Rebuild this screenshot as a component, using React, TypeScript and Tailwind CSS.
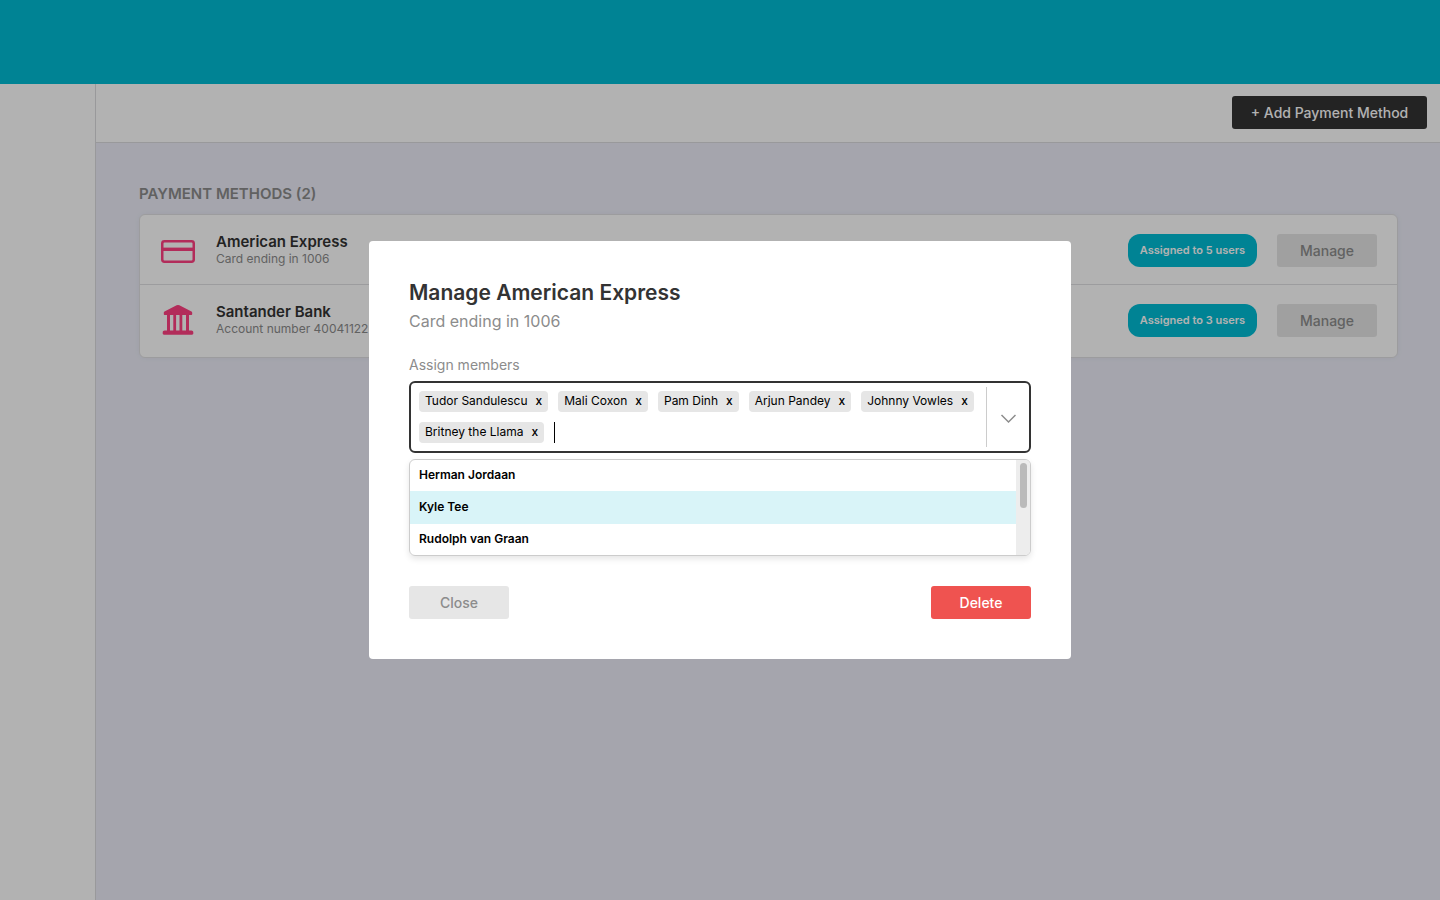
import React from 'react';

type Method = {
  name: string;
  detail: string;
  users: number;
  icon: React.ReactNode;
};

function CardIcon() {
  return (
    <svg width="36" height="34" viewBox="0 0 36 34" fill="none" aria-hidden="true">
      <rect x="2.25" y="7.25" width="31.5" height="20.5" rx="2.2" stroke="currentColor" strokeWidth="2.5" />
      <path d="M2 15.3h32" stroke="currentColor" strokeWidth="3.4" />
    </svg>
  );
}

function BankIcon() {
  return (
    <svg width="36" height="34" viewBox="0 0 36 34" fill="currentColor" aria-hidden="true">
      <path d="M16.600 1.300a3.200 3.200 0 0 1 2.800 0l11.600 6c.9.4 1.200.9 1.200 1.600v1c0 .7-.4 1.100-1.100 1.100H4.900c-.7 0-1.100-.4-1.100-1.100v-1c0-.7.3-1.200 1.200-1.600z" />
      <path d="M7 10h3v17H7zM13.300 10h2.800v17h-2.800zM19.500 10h2.800v17h-2.800zM26 10h3v17h-3z" />
      <path d="M4.600 26.500h26.800c1.100 0 1.900.8 1.900 1.800v1.200c0 .7-.5 1.200-1.200 1.200H3.900c-.7 0-1.200-.5-1.200-1.200v-1.200c0-1 .8-1.800 1.900-1.800z" />
    </svg>
  );
}

const methods: Method[] = [
  { name: 'American Express', detail: 'Card ending in 1006', users: 5, icon: <CardIcon /> },
  { name: 'Santander Bank', detail: 'Account number 40041122', users: 3, icon: <BankIcon /> },
];

const members = [
  'Tudor Sandulescu',
  'Mali Coxon',
  'Pam Dinh',
  'Arjun Pandey',
  'Johnny Vowles',
  'Britney the Llama',
];

const options = ['Herman Jordaan', 'Kyle Tee', 'Rudolph van Graan'];

function MethodRow({ method }: { method: Method }) {
  return (
    <li className="flex items-center border-b border-[#e0e0e2] pt-[18px] pr-5 pb-4 pl-5 last:border-b-0">
      <span className="text-[#ff4081]">{method.icon}</span>
      <div className="ml-5 flex-1">
        <h2 className="text-[15px] leading-[17px] font-semibold text-[#333]">{method.name}</h2>
        <p className="text-xs leading-[18px] text-[#8c8c8c]">{method.detail}</p>
      </div>
      <span className="flex h-[33px] w-[129px] items-center justify-center rounded-xl bg-[#00bcd4] text-[11px] font-semibold text-white">
        Assigned to {method.users} users
      </span>
      <button type="button" className="ml-5 h-[33px] w-[100px] rounded-[3px] bg-[#e6e6e6] text-sm font-medium text-[#8c8c8c]">
        Manage
      </button>
    </li>
  );
}

function MemberSelect() {
  return (
    <div>
      <label htmlFor="members" className="mt-[22px] block text-sm leading-5 text-[#8c8c8c]">
        Assign members
      </label>
      <div className="mt-1.5 flex items-stretch rounded-md border-2 border-[#333]">
        <div className="flex min-w-0 flex-1 flex-wrap gap-2.5 py-2 pl-2">
          {members.map((member) => (
            <span key={member} className="flex h-[21px] items-center rounded-[4px] bg-[#e6e6e6] pb-px pl-1.5 text-xs text-black">
              {member}
              <button type="button" aria-label={`Remove ${member}`} className="pr-1.5 pl-2 font-medium">
                x
              </button>
            </span>
          ))}
          <span className="flex h-[21px] min-w-20 flex-1 border-l border-black">
            <input id="members" type="text" className="w-full bg-transparent text-xs caret-transparent outline-none" />
          </span>
        </div>
        <button
          type="button"
          aria-label="Toggle members"
          className="my-1 flex w-[43px] items-center justify-center border-l border-[#ccc] pt-1 text-[#8c8c8c]"
        >
          <svg width="16" height="10" viewBox="0 0 16 10" fill="none" aria-hidden="true">
            <path d="M1.500 1l7 7 7-7" stroke="currentColor" strokeWidth="1.500" />
          </svg>
        </button>
      </div>
      <div className="mt-1.5 flex overflow-hidden rounded-md border border-[#ccc] shadow-[0_3px_6px_rgba(0,0,0,0.1)]">
        <ul role="listbox" aria-label="Members" className="flex-1 text-xs font-semibold text-black">
          {options.map((option) => (
            <li
              key={option}
              role="option"
              aria-selected={option === 'Kyle Tee'}
              className="flex h-[31px] items-center px-[9px] pb-px aria-selected:h-[33px] aria-selected:bg-[#d9f4f8]"
            >
              {option}
            </li>
          ))}
        </ul>
        <div className="flex w-3.5 justify-center bg-[#ededed] pt-[3px]">
          <div className="h-[45px] w-[7px] rounded-full bg-[#bababa]" />
        </div>
      </div>
    </div>
  );
}

export default function App() {
  return (
    <div className="flex min-h-screen flex-col bg-[#ecedf8] font-['Inter',sans-serif]">
      <header className="h-[84px] bg-[#00bcd4]" />
      <div className="flex flex-1">
        <aside className="w-24 border-r border-[#dcdcde] bg-white" />
        <main className="flex-1">
          <div className="flex justify-end border-b border-[#dcdcde] bg-white pt-3 pr-[13px] pb-[13px]">
            <button type="button" className="h-[33px] w-[195px] rounded-[3px] bg-[#333] text-sm font-medium text-white">
              + Add Payment Method
            </button>
          </div>
          <section className="pt-[41px] pr-[42px] pl-[43px]">
            <h1 className="text-[15px] leading-5 font-semibold text-[#8c8c8c]">PAYMENT METHODS (2)</h1>
            <ul className="mt-2.5 rounded-md border border-[#e0e0e2] bg-white pb-[3px] shadow-[0_0_6px_rgba(0,0,0,0.04)]">
              {methods.map((method) => (
                <MethodRow key={method.name} method={method} />
              ))}
            </ul>
          </section>
        </main>
      </div>

      <div className="fixed inset-0 flex items-center justify-center bg-black/30">
        <div role="dialog" aria-modal="true" aria-labelledby="dialog-title" className="w-full max-w-[702px] rounded-[4px] bg-white p-10">
          <h2 id="dialog-title" className="text-[21px] leading-6 font-semibold text-[#333]">
            Manage American Express
          </h2>
          <p className="mt-1 text-base leading-6 text-[#8c8c8c]">Card ending in 1006</p>
          <MemberSelect />
          <div className="mt-[30px] flex justify-between">
            <button type="button" className="h-[33px] w-[100px] rounded-[3px] bg-[#e6e6e6] text-sm font-medium text-[#8c8c8c]">
              Close
            </button>
            <button type="button" className="h-[33px] w-[100px] rounded-[3px] bg-[#ef5350] text-sm font-medium text-white">
              Delete
            </button>
          </div>
        </div>
      </div>
    </div>
  );
}
